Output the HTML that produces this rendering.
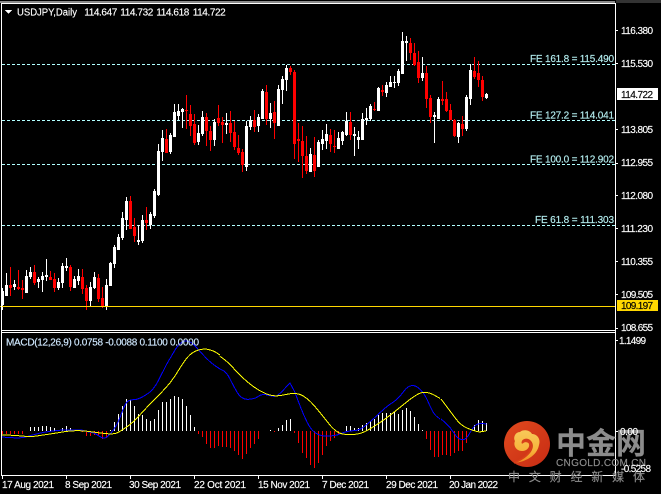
<!DOCTYPE html>
<html><head><meta charset="utf-8"><style>
html,body{margin:0;padding:0;background:#000;width:661px;height:494px;overflow:hidden}
svg{display:block}
text{font-family:"Liberation Sans",sans-serif;font-size:10px;fill:#fff;stroke:#fff;stroke-width:.15px}
.c{font-family:"Liberation Sans","Noto Sans CJK SC",sans-serif}
.k{fill:#000;stroke:#000}
.f{fill:#b4eef0;stroke:#b4eef0}
.w{fill:#8c8c8c;stroke:#8c8c8c}
</style></head><body>
<svg width="661" height="494" viewBox="0 0 661 494" xmlns="http://www.w3.org/2000/svg">
<rect width="661" height="494" fill="#000"/>
<rect x="0" y="1" width="615" height="2" fill="#8a8a8a"/>
<rect x="616" y="0" width="45" height="3" fill="#333"/>
<g shape-rendering="crispEdges">
<!-- fib lines -->
<g stroke="#b0ffff" stroke-width="1" stroke-dasharray="3 2" fill="none">
<path d="M2 64.5H615M2 120.5H615M2 164.5H615M2 225.5H615"/>
</g>
<!-- white wicks -->
<path fill="none" stroke="#fff" stroke-width="1" d="M2.5 288V310M6.5 273V296M14.5 280V290M26.5 270V293M30.5 267V279M38.5 277V288M42.5 272V292M46.5 259V281M58.5 278V290M62.5 263V288M66.5 258V271M74.5 276V288M78.5 269V285M90.5 282V306M94.5 272V289M106.5 279V310M110.5 262V286M114.5 245V268M118.5 234V250M122.5 212V240M126.5 197V230M138.5 225V245M142.5 215V243M150.5 212V229M154.5 189V218M158.5 144V196M162.5 130V161M170.5 133V154M174.5 104V137M178.5 104V120M182.5 108V128M198.5 125V145M202.5 111V136M214.5 119V146M226.5 113V134M246.5 121V171M250.5 116V130M258.5 114V132M262.5 89V119M270.5 103V128M278.5 85V126M282.5 76V104M286.5 65V91M310.5 148V172M318.5 140V167M322.5 130V150M326.5 124V149M338.5 132V149M342.5 131V145M346.5 112V136M354.5 127V156M358.5 131V149M362.5 113V140M366.5 108V125M370.5 104V121M378.5 87V111M386.5 82V97M390.5 76V87M394.5 76V88M398.5 69V86M402.5 32V74M406.5 36V61M422.5 57V81M434.5 112V143M438.5 97V119M458.5 122V143M466.5 95V131M470.5 64V105M486.5 93V99"/>
<!-- white bodies -->
<path fill="none" stroke="#fff" stroke-width="3" d="M2.5 291V305M6.5 285V296M14.5 284V287M26.5 276V293M30.5 272V277M38.5 279V282M42.5 276V280M46.5 275V277M58.5 282V288M62.5 266V283M66.5 266V268M74.5 279V288M78.5 276V281M90.5 287V301M94.5 277V288M106.5 285V307M110.5 263V286M114.5 247V264M118.5 237V250M122.5 218V238M126.5 201V220M138.5 240V242M142.5 220V241M150.5 214V225M154.5 191V216M158.5 151V195M162.5 138V152M170.5 135V152M174.5 112V137M178.5 111V116M182.5 109V112M198.5 133V142M202.5 117V134M214.5 122V140M226.5 123V125M246.5 126V167M250.5 120V127M258.5 117V126M262.5 91V119M270.5 113V119M278.5 89V126M282.5 79V90M286.5 68V80M310.5 154V172M318.5 142V167M322.5 139V144M326.5 134V141M338.5 138V149M342.5 132V141M346.5 121V135M354.5 134V136M358.5 137V140M362.5 119V140M366.5 118V120M370.5 106V119M378.5 88V111M386.5 85V93M390.5 82V87M394.5 82V83M398.5 71V83M402.5 41V74M406.5 41V43M422.5 73V78M434.5 115V117M438.5 99V119M458.5 123V137M466.5 97V129M470.5 70V99M486.5 94V98"/>
<!-- red wicks -->
<path fill="none" stroke="#f00" stroke-width="1" d="M10.5 267V296M18.5 270V290M22.5 280V299M34.5 265V285M50.5 271V280M54.5 273V292M70.5 265V291M82.5 269V294M86.5 285V310M98.5 274V302M102.5 287V308M130.5 196V229M134.5 218V242M146.5 207V230M166.5 129V153M186.5 95V129M190.5 105V136M194.5 114V145M206.5 113V146M210.5 126V151M218.5 105V126M222.5 117V143M230.5 111V142M234.5 121V150M238.5 135V155M242.5 149V172M254.5 110V132M266.5 85V125M274.5 101V139M290.5 66V75M294.5 70V159M298.5 123V162M302.5 126V178M306.5 136V174M314.5 137V177M330.5 129V152M334.5 130V153M350.5 112V140M374.5 102V111M382.5 85V96M410.5 38V60M414.5 43V66M418.5 51V83M426.5 66V108M430.5 95V123M442.5 81V105M446.5 92V112M450.5 104V120M454.5 119V137M462.5 116V136M474.5 57V79M478.5 61V87M482.5 76V101"/>
<!-- red bodies -->
<path fill="none" stroke="#f00" stroke-width="3" d="M10.5 285V288M18.5 287V289M22.5 288V290M34.5 272V283M50.5 277V280M54.5 279V288M70.5 267V287M82.5 277V289M86.5 288V301M98.5 278V299M102.5 298V307M130.5 201V229M134.5 227V236M146.5 220V223M166.5 139V153M186.5 110V111M190.5 114V126M194.5 124V143M206.5 117V131M210.5 131V140M218.5 118V123M222.5 122V125M230.5 123V133M234.5 132V147M238.5 148V153M242.5 152V165M254.5 120V127M266.5 92V119M274.5 112V123M290.5 68V72M294.5 72V144M298.5 139V141M302.5 141V156M306.5 156V171M314.5 155V171M330.5 135V144M334.5 146V147M350.5 122V135M374.5 109V110M382.5 90V92M410.5 43V53M414.5 53V65M418.5 62V78M426.5 73V99M430.5 98V117M442.5 99V101M446.5 99V111M450.5 110V120M454.5 120V136M462.5 124V129M474.5 71V77M478.5 73V80M482.5 80V97"/>
<!-- gold line -->
<path d="M0 306.5H615" stroke="#ffd700" stroke-width="1" fill="none"/>
<!-- MACD histogram -->
<path fill="none" stroke="#fff" stroke-width="1" d="M30.5 431V427M34.5 431V427M38.5 431V427M42.5 431V426M46.5 431V426M50.5 431V427M54.5 431V428M62.5 431V428M66.5 431V426M70.5 431V428M110.5 431V430M114.5 431V422M118.5 431V414M122.5 431V406M126.5 431V399M130.5 431V400M134.5 431V406M138.5 431V414M142.5 431V415M146.5 431V419M150.5 431V421M154.5 431V419M158.5 431V410M162.5 431V402M166.5 431V402M170.5 431V399M174.5 431V396M178.5 431V397M182.5 431V399M186.5 431V406M190.5 431V415M194.5 431V427M270.5 431V430M278.5 431V428M282.5 431V425M286.5 431V420M290.5 431V419M346.5 431V426M350.5 431V426M354.5 431V428M358.5 431V428M362.5 431V425M366.5 431V423M370.5 431V421M374.5 431V419M378.5 431V415M382.5 431V413M386.5 431V413M390.5 431V413M394.5 431V412M398.5 431V414M402.5 431V410M406.5 431V408M410.5 431V411M414.5 431V417M418.5 431V424M422.5 431V430M474.5 431V425M478.5 431V420M482.5 431V421M486.5 431V423"/>
<path fill="none" stroke="#f00" stroke-width="1" d="M2.5 431V434M6.5 431V434M10.5 431V434M14.5 431V434M18.5 431V434M22.5 431V434M82.5 431V432M86.5 431V436M90.5 431V436M94.5 431V435M98.5 431V436M102.5 431V439M106.5 431V438M198.5 431V434M202.5 431V437M206.5 431V444M210.5 431V448M214.5 431V448M218.5 431V446M222.5 431V447M226.5 431V447M230.5 431V448M234.5 431V451M238.5 431V455M242.5 431V459M246.5 431V454M250.5 431V448M254.5 431V444M258.5 431V439M274.5 431V432M294.5 431V433M298.5 431V443M302.5 431V453M306.5 431V458M310.5 431V465M314.5 431V468M318.5 431V463M322.5 431V455M326.5 431V446M330.5 431V441M334.5 431V438M338.5 431V434M426.5 431V439M430.5 431V450M434.5 431V457M438.5 431V457M442.5 431V455M446.5 431V455M450.5 431V456M454.5 431V453M458.5 431V451M462.5 431V451M466.5 431V443"/>
<!-- MACD lines -->
<g fill="none" stroke-width="3" stroke-linejoin="round">
<g transform="translate(0 329) scale(.33333)">
<path stroke="#0000ff" d="M6,324 L18,325 Q30,326 48,326.5 Q66,327 78,323.5 Q90,320 105,316 Q120,312 135,309.5 Q150,307 167,305 Q185,303 197,303 L245,303 Q260,308 272,310 Q285,312 297,321 Q309,330 317,326 Q325,322 332,313 Q340,305 347,292 Q355,280 365,252 Q375,225 382,218 Q390,212 402,212 Q415,212 437,198 Q460,185 475,155 Q490,125 502,102 Q515,80 527,60 Q540,40 552,37 Q565,35 575,42 Q585,50 607,75 Q630,100 645,110 L660,120"/>
<path stroke="#ffff00" d="M6,318 L28,318.5 Q50,319 70,321.5 Q90,324 110,321 Q130,318 150,315 Q170,312 190,308.5 Q210,305 230,305 Q250,305 275,308.5 Q300,312 320,314 Q340,316 350,312 Q360,308 380,294 Q400,280 420,257.5 Q440,235 465,210 Q490,185 505,167.5 Q520,150 535,125 Q550,100 562.5,85 Q575,70 592.5,64 Q610,58 625,61.5 Q640,65 650,71.5 L660,78"/>
</g>
<g transform="translate(220 329) scale(.33333)">
<path stroke="#0000ff" d="M0,120 L10,125 Q20,130 30,150 Q40,170 52,191 Q65,212 85,211 Q105,210 115,202 Q125,195 137,197 Q150,200 160,202 Q170,205 190,183 L210,162 L225,190 Q250,260 267,290 Q285,320 315,321 Q345,322 362,314 Q380,306 400,305 Q420,305 440,287 Q460,270 480,251 Q500,232 517,221 Q535,210 552,186 Q570,162 590,173 Q610,185 625,220 Q640,255 650,262 L660,270"/>
<path stroke="#ffff00" d="M0,82 L15,93 Q30,105 47,125 Q65,145 90,165 Q115,185 140,195 Q165,205 195,197 Q225,190 242,197 Q260,205 280,227 Q300,250 325,282 Q350,315 375,316 Q400,318 417,314 Q435,310 462,292 Q490,275 515,255 Q540,235 565,215 Q590,195 605,191 Q620,187 640,197 L660,208"/>
</g>
<g transform="translate(441 329) scale(.33333)">
<path stroke="#0000ff" d="M0,270 L14,282 Q28,295 39,312 Q50,330 62,332 Q75,335 87,311 Q100,288 110,285 Q120,282 136,285"/>
<path stroke="#ffff00" d="M0,210 L15,230 Q30,250 45,270 Q60,290 80,298 Q100,306 110,308 Q120,310 136,305"/>
</g>
</g>
<!-- frame -->
<g fill="#fff">
<rect x="1" y="3" width="615" height="1"/>
<rect x="1" y="3" width="1" height="473"/>
<rect x="615" y="3" width="1" height="473"/>
<rect x="1" y="330" width="615" height="1"/>
<rect x="1" y="332" width="615" height="1"/>
<rect x="1" y="475" width="615" height="1"/>
<!-- right ticks -->
<rect x="616" y="30" width="2" height="1"/><rect x="616" y="63" width="2" height="1"/><rect x="616" y="129" width="2" height="1"/><rect x="616" y="163" width="2" height="1"/><rect x="616" y="195" width="2" height="1"/><rect x="616" y="228" width="2" height="1"/><rect x="616" y="261" width="2" height="1"/><rect x="616" y="294" width="2" height="1"/><rect x="616" y="328" width="2" height="1"/><rect x="616" y="340" width="2" height="1"/><rect x="616" y="431" width="2" height="1"/>
<!-- bottom ticks -->
<rect x="2" y="476" width="1" height="3"/><rect x="66" y="476" width="1" height="3"/><rect x="130" y="476" width="1" height="3"/><rect x="194" y="476" width="1" height="3"/><rect x="258" y="476" width="1" height="3"/><rect x="322" y="476" width="1" height="3"/><rect x="386" y="476" width="1" height="3"/><rect x="450" y="476" width="1" height="3"/>
</g>
<polygon points="5,10 12,10 8.5,14" fill="#fff"/>
<rect x="617" y="88" width="41" height="12" fill="#fff"/>
<rect x="617" y="300" width="41" height="11" fill="#ffd700"/>
</g>
<!-- watermark -->
<defs>
<linearGradient id="r" x1="0" y1="0" x2="1" y2="1"><stop offset="0" stop-color="#e04a1e"/><stop offset="1" stop-color="#c82c14"/></linearGradient>
<linearGradient id="y" x1="0" y1="0" x2="0" y2="1"><stop offset="0" stop-color="#f7c95a"/><stop offset=".6" stop-color="#f7b53c"/><stop offset="1" stop-color="#f08a20"/></linearGradient>
</defs>
<circle cx="527" cy="444" r="23" fill="url(#r)"/>
<path d="M514 463C525 462 537 456 539 445C541 439 537 434 532 434C530 430 523 429 520 432C515 432 513 438 515 441C513 445 516 451 522 451C527 451 530 447 529 444C528 441 523 441 522 444C520 439 527 437 530 440C535 444 533 451 528 455C524 459 519 461 514 463Z" fill="url(#y)"/>
<path d="M522 443C526 439 533 443 531 449C529 455 521 460 514 463" fill="none" stroke="#d8401a" stroke-width="1.6"/>
<text class="c w" x="556" y="454" style="font-size:30px;font-weight:700">中金网</text>
<text class="w" x="556" y="466" textLength="90">CNGOLD.COM.CN</text>
<text class="c w" x="508" y="481" textLength="137" style="font-size:12px">中文财经新媒体</text>
<!-- title -->
<text x="17" y="15.5" textLength="60" lengthAdjust="spacingAndGlyphs">USDJPY,Daily</text>
<text x="84.3" y="15.5" textLength="33">114.647</text>
<text x="120.3" y="15.5" textLength="33">114.732</text>
<text x="156.3" y="15.5" textLength="33">114.618</text>
<text x="192.7" y="15.5" textLength="33">114.722</text>
<!-- FE labels -->
<text class="f" x="530" y="62" textLength="84">FE 161.8 = 115.490</text>
<text class="f" x="530" y="118.5" textLength="84">FE 127.2 = 114.041</text>
<text class="f" x="530" y="162.5" textLength="84">FE 100.0 = 112.902</text>
<text class="f" x="535" y="223" textLength="79">FE 61.8 = 111.303</text>
<!-- price axis -->
<text x="621" y="34" textLength="32">116.380</text>
<text x="621" y="67" textLength="32">115.530</text>
<text class="k" x="621" y="98" textLength="32">114.722</text>
<text x="621" y="133" textLength="32">113.805</text>
<text x="621" y="166" textLength="32">112.955</text>
<text x="621" y="199" textLength="32">112.080</text>
<text x="621" y="232" textLength="32">111.230</text>
<text x="621" y="265" textLength="32">110.355</text>
<text x="621" y="298" textLength="32">109.505</text>
<text class="k" x="621" y="309" textLength="32">109.197</text>
<text x="621" y="331" textLength="32">108.655</text>
<text x="619" y="344" textLength="27">1.1499</text>
<text x="620" y="435" textLength="18">0.00</text>
<text x="621" y="472" textLength="30">-0.5258</text>
<!-- MACD label -->
<text x="6" y="345.5" textLength="193" style="fill:#cfe8ff;stroke:#cfe8ff">MACD(12,26,9) 0.0758 -0.0088 0.1100 0.0000</text>
<!-- dates -->
<text x="2" y="488" textLength="52">17 Aug 2021</text>
<text x="65" y="488" textLength="47">8 Sep 2021</text>
<text x="129" y="488" textLength="52">30 Sep 2021</text>
<text x="194" y="488" textLength="52">22 Oct 2021</text>
<text x="258" y="488" textLength="52">15 Nov 2021</text>
<text x="322" y="488" textLength="47">7 Dec 2021</text>
<text x="386" y="488" textLength="52">29 Dec 2021</text>
<text x="449" y="488" textLength="49">20 Jan 2022</text>
</svg>
</body></html>
